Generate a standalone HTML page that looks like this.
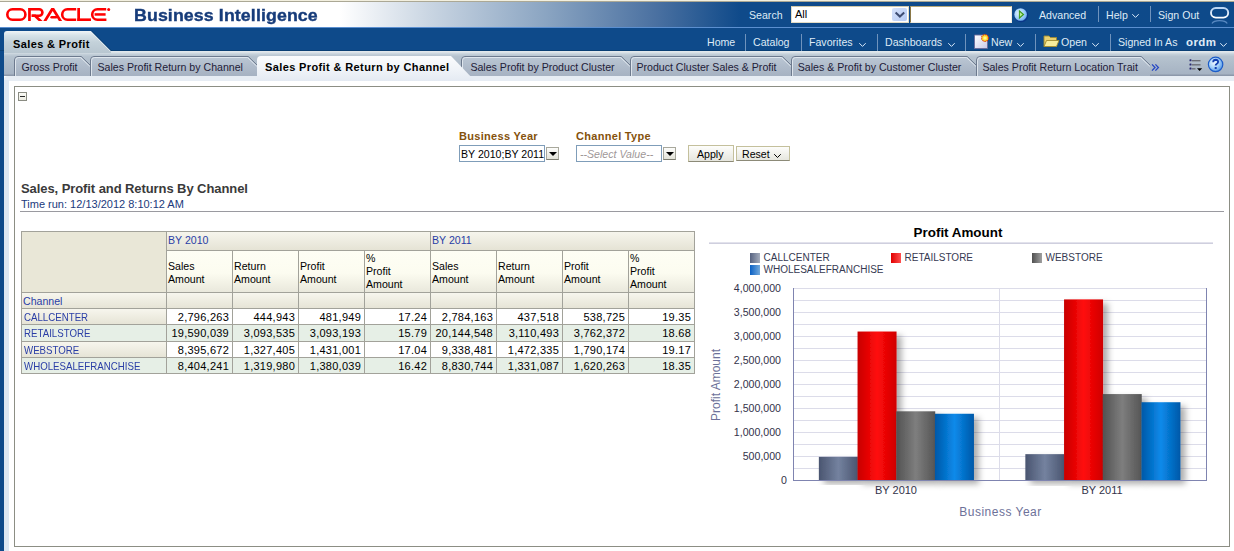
<!DOCTYPE html>
<html><head><meta charset="utf-8">
<style>
*{margin:0;padding:0;box-sizing:border-box}
html,body{width:1234px;height:551px;overflow:hidden;background:#fff;font-family:"Liberation Sans",sans-serif;font-size:11px;color:#000}
.a{position:absolute;white-space:nowrap}
#hdr{position:absolute;left:0;top:0;width:1234px;height:27px;border-top:2px solid #aba895;
 background:linear-gradient(to right,#fff 0,#fff 340px,#c9d5e2 430px,#8ba5c2 545px,#4b71a1 655px,#0f4a8a 740px,#0e4a8a 1234px)}
#row2{position:absolute;left:0;top:27px;width:1234px;height:24px;background:#0e4a8a;border-top:1px solid #5b8fd0}
#tabbar{position:absolute;left:0;top:51px;width:1234px;height:25px;
 background:linear-gradient(#e2e8ec 0,#e2e8ec 1px,#d2dce3 2px,#c2ced8 3.5px,#b6c3cf 5.5px,#aebbc9 14px,#a6b3c3 23px,#8c98aa 24px,#8c98aa 25px)}
#leftstrip{position:absolute;left:0;top:51px;width:4px;height:500px;background:#0e4a8a}
#frame{position:absolute;left:4px;top:76px;width:1230px;height:475px;background:#fff;border-top-left-radius:4px}
#frameband{position:absolute;left:4px;top:76px;width:1230px;height:5px;background:#e7edf4;border-top-left-radius:4px}
#framel{position:absolute;left:4px;top:80px;width:5px;height:471px;background:#dde7f2}
#box{position:absolute;left:14px;top:86px;width:1216px;height:461px;border:1px solid #8c8e84;border-right-color:#8c8e84}
.w{color:#dfeaf6}
.sep{position:absolute;width:1px;background:#6f93bd}
.tabt{top:61px;font-size:10.6px;color:#1e2038}
.pl{font-size:11px;font-weight:700;color:#85520c;letter-spacing:0.3px}
.dd{width:13px;height:13px;border:1px solid #a8a89c;border-bottom-color:#7c7c70;background:linear-gradient(#fdfdfb,#e2e2d8)}
.dd:after{content:"";position:absolute;left:2px;top:4px;border-left:4px solid transparent;border-right:4px solid transparent;border-top:4px solid #000}
.btn{border:1px solid #c4c09c;border-bottom-color:#8c8a78;background:linear-gradient(#fdfdfb,#e6e6de)}
.th{font-size:10.6px;color:#000}
.td{font-size:10.6px;color:#000}
</style></head><body>
<div id="hdr"></div>
<div class="a" style="left:0;top:0;width:1234px;height:1px;background:#f2efdf"></div>
<div id="row2"></div>
<div class="a" style="left:0;top:50px;width:1234px;height:1px;background:#0a3f74"></div>
<div id="tabbar"></div>
<div id="leftstrip"></div>
<div id="frame"></div>
<div id="frameband"></div>
<div id="framel"></div>
<div id="box"></div>

<!-- ORACLE logo -->
<svg class="a" style="left:0;top:0" width="115" height="27" viewBox="0 0 115 27">
 <g fill="none" stroke="#ff0000" stroke-width="2.6">
  <rect x="7.3" y="9.3" width="18.1" height="10.4" rx="5.2"/>
  <path d="M29.4,9.3 H39.2 A3.2,3.2 0 0 1 39.2,15.7 H31.5"/>
  <path d="M76.2,9.3 H67.4 A5.2,5.2 0 0 0 67.4,19.7 H76.2"/>
  <path d="M106.2,9.3 H97.4 A5.2,5.2 0 0 0 97.4,19.7 H106.4"/>
 </g>
 <g fill="#ff0000">
  <rect x="28.1" y="8" width="2.7" height="13"/>
  <path d="M31.6,14.6 H35.6 L42.6,21 H38.6 Z"/>
  <path d="M43.3,21 L51.3,8 H54.1 L62.1,21 H58.9 L52.7,11.1 L46.5,21 Z"/>
  <rect x="50.3" y="15.9" width="7" height="2.7" rx="1.3"/>
  <rect x="77.3" y="8" width="2.7" height="13"/>
  <rect x="77.3" y="18.4" width="13.7" height="2.6"/>
  <rect x="94.6" y="13.2" width="11" height="2.5"/>
  <circle cx="108.7" cy="9.4" r="1.5"/>
 </g>
</svg>

<div class="a" style="left:134px;top:6px;font-size:16.6px;font-weight:700;color:#173c7a;letter-spacing:0.1px;-webkit-text-stroke:0.35px #173c7a;transform:scaleX(1.07);transform-origin:0 0">Business Intelligence</div>

<!-- top right -->
<div class="a w" style="left:749px;top:9px;font-size:10.6px">Search</div>
<div class="a" style="left:791px;top:6px;width:118px;height:17px;background:#fff;border:1px solid #e4dcc4;border-top-color:#d2c8a8"></div>
<div class="a" style="left:795px;top:8px;font-size:11px;color:#000">All</div>
<div class="a" style="left:892px;top:8px;width:15px;height:13px;background:linear-gradient(135deg,#d6e2fb,#b6caf3);border-radius:2px"></div>
<svg class="a" style="left:894px;top:11px" width="12" height="8" viewBox="0 0 12 8"><path d="M1.6,1.6 L5.9,5.6 L10.2,1.6" fill="none" stroke="#3e4c72" stroke-width="2"/></svg>
<div class="a" style="left:910px;top:6px;width:102px;height:17px;background:#fff;border:1px solid #f0ece0;border-top-color:#b8a878;border-left-color:#8a7848"></div>
<svg class="a" style="left:1012px;top:6px" width="18" height="18" viewBox="0 0 18 18">
 <defs><radialGradient id="gb" cx="38%" cy="40%" r="62%"><stop offset="0" stop-color="#dff0ff"/><stop offset="0.6" stop-color="#a6d4fb"/><stop offset="1" stop-color="#6fb0f0"/></radialGradient></defs>
 <circle cx="9.2" cy="9.2" r="7" fill="#0a3688"/>
 <circle cx="8.6" cy="8.5" r="6.3" fill="url(#gb)"/>
 <path d="M6.9,3.8 L12.4,8.5 L6.9,13.2 Z" fill="#3c9a1c"/>
 <path d="M7.9,6.2 L10.6,8.5 L7.9,10.8 Z" fill="#b8ec98"/>
</svg>
<div class="a w" style="left:1039px;top:9px;font-size:10.6px">Advanced</div>
<div class="sep" style="left:1098px;top:6px;height:16px"></div>
<div class="a w" style="left:1106px;top:9px;font-size:10.6px">Help</div>
<svg class="a" style="left:1131px;top:13px" width="9" height="6" viewBox="0 0 9 6"><path d="M1.3,1.2 L4.5,4.4 L7.7,1.2" fill="none" stroke="#dcecfc" stroke-width="1"/></svg>
<div class="sep" style="left:1150px;top:6px;height:16px"></div>
<div class="a w" style="left:1158px;top:9px;font-size:10.6px">Sign Out</div>
<svg class="a" style="left:1208px;top:5px" width="24" height="20" viewBox="0 0 24 20">
 <defs><linearGradient id="rg" x1="0" y1="0" x2="0" y2="1"><stop offset="0" stop-color="#b8d4f4"/><stop offset="1" stop-color="#ffffff"/></linearGradient></defs>
 <rect x="3" y="3" width="17.2" height="9.6" rx="4.8" fill="none" stroke="url(#rg)" stroke-width="1.9"/>
 <path d="M4,18.5 Q5.5,15.6 11.6,15.6 Q17.7,15.6 19.2,18.5" fill="none" stroke="#6d9ad0" stroke-width="1.3" opacity="0.8"/>
</svg>

<!-- row 2 -->
<svg class="a" style="left:0;top:27px" width="120" height="28" viewBox="0 0 120 28">
 <defs><linearGradient id="tg" x1="0" y1="0" x2="0" y2="1"><stop offset="0" stop-color="#f0f5f7"/><stop offset="0.2" stop-color="#d6e2e8"/><stop offset="0.5" stop-color="#c4d2da"/><stop offset="1" stop-color="#b8c6d0"/></linearGradient></defs>
 <path d="M4,26 V7 Q4,4 7,4 H91 L111,24 V26 Z" fill="url(#tg)"/>
 <path d="M91.3,3.6 L111.6,23.9" stroke="#083a68" stroke-width="1" fill="none" opacity="0.7"/>
 <path d="M90.6,4.6 L110.4,24.4" stroke="#e8eff3" stroke-width="1" fill="none" opacity="0.8"/>
</svg>
<div class="a" style="left:13px;top:38px;font-size:11px;font-weight:700;color:#000;letter-spacing:0.38px">Sales &amp; Profit</div>

<div class="a w" style="left:707px;top:36px;font-size:10.6px">Home</div>
<div class="sep" style="left:745px;top:34px;height:17px"></div>
<div class="a w" style="left:753px;top:36px;font-size:10.6px">Catalog</div>
<div class="sep" style="left:801px;top:34px;height:17px"></div>
<div class="a w" style="left:809px;top:36px;font-size:10.6px">Favorites</div>
<svg class="a" style="left:858px;top:42px" width="9" height="6" viewBox="0 0 9 6"><path d="M1.3,1.2 L4.5,4.4 L7.7,1.2" fill="none" stroke="#dcecfc" stroke-width="1"/></svg>
<div class="sep" style="left:877px;top:34px;height:17px"></div>
<div class="a w" style="left:885px;top:36px;font-size:10.6px">Dashboards</div>
<svg class="a" style="left:947px;top:42px" width="9" height="6" viewBox="0 0 9 6"><path d="M1.3,1.2 L4.5,4.4 L7.7,1.2" fill="none" stroke="#dcecfc" stroke-width="1"/></svg>
<div class="sep" style="left:965px;top:34px;height:17px"></div>
<svg class="a" style="left:972px;top:32px" width="20" height="18" viewBox="0 0 20 18">
 <defs><linearGradient id="pg" x1="0" y1="0" x2="1" y2="1"><stop offset="0" stop-color="#ffffff"/><stop offset="1" stop-color="#c8c8e8"/></linearGradient></defs>
 <path d="M2.5,3 H11 L15.5,7.5 V16.5 H2.5 Z" fill="url(#pg)" stroke="#6a6a9a" stroke-width="0.9"/>
 <circle cx="13" cy="6" r="3.4" fill="#ffe030" stroke="#d83010" stroke-width="1.1" stroke-dasharray="1.4 0.8"/><circle cx="13" cy="6" r="1.6" fill="#fff890"/>
</svg>
<div class="a w" style="left:991px;top:36px;font-size:10.6px">New</div>
<svg class="a" style="left:1016px;top:42px" width="9" height="6" viewBox="0 0 9 6"><path d="M1.3,1.2 L4.5,4.4 L7.7,1.2" fill="none" stroke="#dcecfc" stroke-width="1"/></svg>
<div class="sep" style="left:1035px;top:34px;height:17px"></div>
<svg class="a" style="left:1042px;top:33px" width="18" height="16" viewBox="0 0 18 16">
 <path d="M2,3 H7 L8.5,4.5 H14.5 V13.5 H2 Z" fill="#e8d070" stroke="#a08a30" stroke-width="0.9"/>
 <path d="M2,13.5 L4.5,7.5 H17 L14.5,13.5 Z" fill="#f8ec9c" stroke="#a08a30" stroke-width="0.9"/>
</svg>
<div class="a w" style="left:1061px;top:36px;font-size:10.6px">Open</div>
<svg class="a" style="left:1091px;top:42px" width="9" height="6" viewBox="0 0 9 6"><path d="M1.3,1.2 L4.5,4.4 L7.7,1.2" fill="none" stroke="#dcecfc" stroke-width="1"/></svg>
<div class="sep" style="left:1110px;top:34px;height:17px"></div>
<div class="a w" style="left:1118px;top:36px;font-size:10.6px">Signed In As</div>
<div class="a w" style="left:1186px;top:36px;font-size:11.5px;font-weight:700;letter-spacing:0.4px">ordm</div>
<svg class="a" style="left:1219px;top:42px" width="9" height="6" viewBox="0 0 9 6"><path d="M1.3,1.2 L4.5,4.4 L7.7,1.2" fill="none" stroke="#dcecfc" stroke-width="1"/></svg>

<!-- tab bar -->
<svg class="a" style="left:0;top:51px" width="1234" height="31" viewBox="0 51 1234 31">
 <defs>
  <linearGradient id="itab" x1="0" y1="0" x2="0" y2="1"><stop offset="0" stop-color="#bcc8d5"/><stop offset="0.5" stop-color="#b0bccb"/><stop offset="1" stop-color="#a6b2c2"/></linearGradient>
  <linearGradient id="atab" x1="0" y1="0" x2="0" y2="1"><stop offset="0" stop-color="#fbfcfd"/><stop offset="0.6" stop-color="#eef2f7"/><stop offset="1" stop-color="#e4eaf2"/></linearGradient>
 </defs>
 <g id="tabs">
 <path d="M14,76 V60 Q14,56 18,56 H81 L90,65 V76 Z" fill="url(#itab)"/>
 <path d="M14.5,76 V60 Q14.5,56.5 18,56.5 H81.3 L90.3,65.3" fill="none" stroke="#6d7a8e" stroke-width="1"/>
 <path d="M15.5,76 V60.5 Q15.5,57.5 18.5,57.5 H80.5 L89.8,66.3" fill="none" stroke="#e6ecf2" stroke-width="1" opacity="0.85"/>
 <path d="M90,76 V60 Q90,56 94,56 H248 L257,65 V76 Z" fill="url(#itab)"/>
 <path d="M90.5,76 V60 Q90.5,56.5 94,56.5 H248.3 L257.3,65.3" fill="none" stroke="#6d7a8e" stroke-width="1"/>
 <path d="M91.5,76 V60.5 Q91.5,57.5 94.5,57.5 H247.5 L256.8,66.3" fill="none" stroke="#e6ecf2" stroke-width="1" opacity="0.85"/>
 <path d="M461,76 V60 Q461,56 465,56 H621 L630,65 V76 Z" fill="url(#itab)"/>
 <path d="M461.5,76 V60 Q461.5,56.5 465,56.5 H621.3 L630.3,65.3" fill="none" stroke="#6d7a8e" stroke-width="1"/>
 <path d="M462.5,76 V60.5 Q462.5,57.5 465.5,57.5 H620.5 L629.8,66.3" fill="none" stroke="#e6ecf2" stroke-width="1" opacity="0.85"/>
 <path d="M630,76 V60 Q630,56 634,56 H782 L791,65 V76 Z" fill="url(#itab)"/>
 <path d="M630.5,76 V60 Q630.5,56.5 634,56.5 H782.3 L791.3,65.3" fill="none" stroke="#6d7a8e" stroke-width="1"/>
 <path d="M631.5,76 V60.5 Q631.5,57.5 634.5,57.5 H781.5 L790.8,66.3" fill="none" stroke="#e6ecf2" stroke-width="1" opacity="0.85"/>
 <path d="M791,76 V60 Q791,56 795,56 H967 L976,65 V76 Z" fill="url(#itab)"/>
 <path d="M791.5,76 V60 Q791.5,56.5 795,56.5 H967.3 L976.3,65.3" fill="none" stroke="#6d7a8e" stroke-width="1"/>
 <path d="M792.5,76 V60.5 Q792.5,57.5 795.5,57.5 H966.5 L975.8,66.3" fill="none" stroke="#e6ecf2" stroke-width="1" opacity="0.85"/>
 <path d="M976,76 V60 Q976,56 980,56 H1141 L1150,65 V76 Z" fill="url(#itab)"/>
 <path d="M976.5,76 V60 Q976.5,56.5 980,56.5 H1141.3 L1150.3,65.3" fill="none" stroke="#6d7a8e" stroke-width="1"/>
 <path d="M977.5,76 V60.5 Q977.5,57.5 980.5,57.5 H1140.5 L1149.8,66.3" fill="none" stroke="#e6ecf2" stroke-width="1" opacity="0.85"/>
 <path d="M257,81 V60 Q257,56 261,56 H451 L475,81 Z" fill="url(#atab)"/>
 </g>
</svg>
<!--TABT-->
<div class="a tabt" style="left:21.6px">Gross Profit</div>
<div class="a tabt" style="left:97.5px">Sales Profit Return by Channel</div>
<div class="a tabt" style="left:470.4px">Sales Profit by Product Cluster</div>
<div class="a tabt" style="left:636.4px">Product Cluster Sales &amp; Profit</div>
<div class="a tabt" style="left:797.7px">Sales &amp; Profit by Customer Cluster</div>
<div class="a tabt" style="left:982.4px">Sales Profit Return Location Trait</div>
<div class="a" style="left:265px;top:61px;font-size:11px;font-weight:700;color:#000;letter-spacing:0.38px">Sales Profit &amp; Return by Channel</div>
<!--/TABT-->
<!--CONTENT-->
<div class="a" style="left:18px;top:92px;width:9px;height:9px;border:1px solid #8a8c82;background:linear-gradient(#fbfbf6,#ecece2)"></div>
<div class="a" style="left:20px;top:96px;width:5px;height:1px;background:#2a2a2a"></div>

<div class="a pl" style="left:459px;top:130px">Business Year</div>
<div class="a" style="left:459px;top:145px;width:86px;height:17px;border:1px solid #7f9db9;background:#fff"></div>
<div class="a" style="left:461px;top:148px;font-size:10.6px;color:#000">BY 2010;BY 2011</div>
<div class="a dd" style="left:546px;top:147px"></div>
<div class="a pl" style="left:576px;top:130px">Channel Type</div>
<div class="a" style="left:576px;top:145px;width:86px;height:17px;border:1px solid #7f9db9;background:#fff"></div>
<div class="a" style="left:580px;top:148px;font-size:10.6px;font-style:italic;color:#a09898">--Select Value--</div>
<div class="a dd" style="left:663px;top:147px"></div>
<div class="a btn" style="left:688px;top:145px;width:46px;height:17px"></div>
<div class="a" style="left:697px;top:148px;font-size:10.6px;color:#000">Apply</div>
<div class="a btn" style="left:736px;top:146px;width:54px;height:15px"></div>
<div class="a" style="left:742px;top:148px;font-size:10.6px;color:#000">Reset</div>
<svg class="a" style="left:773px;top:153px" width="9" height="6" viewBox="0 0 9 6"><path d="M1.2,1.2 L4.5,4.5 L7.8,1.2" fill="none" stroke="#000" stroke-width="1"/></svg>

<div class="a" style="left:21px;top:181px;font-size:13px;font-weight:700;color:#3a3a3a;letter-spacing:-0.08px">Sales, Profit and Returns By Channel</div>
<div class="a" style="left:21px;top:198px;font-size:11px;color:#213a7c">Time run: 12/13/2012 8:10:12 AM</div>
<div class="a" style="left:20px;top:211px;width:1204px;height:1px;background:#9a9aa0"></div>
<!--/CONTENT-->
<!--TABLE-->
<div class="a" style="left:21px;top:231px;width:145px;height:61px;background:#e9e7d7"></div>
<div class="a" style="left:166px;top:231px;width:528px;height:19px;background:linear-gradient(#f7f6ee,#e5e3d5)"></div>
<div class="a" style="left:166px;top:250px;width:528px;height:42px;background:linear-gradient(#fefef5 0,#fcfcf0 55%,#e9e8dc 100%)"></div>
<div class="a" style="left:21px;top:292px;width:673px;height:16px;background:linear-gradient(#f8f7ef,#e6e4d6)"></div>
<div class="a" style="left:21px;top:308px;width:145px;height:16px;background:linear-gradient(#f8f7ef,#e6e4d6)"></div>
<div class="a" style="left:166px;top:308px;width:528px;height:16px;background:#fff"></div>
<div class="a" style="left:21px;top:324px;width:673px;height:17px;background:#e6efe6"></div>
<div class="a" style="left:21px;top:341px;width:145px;height:16px;background:linear-gradient(#f8f7ef,#e6e4d6)"></div>
<div class="a" style="left:166px;top:341px;width:528px;height:16px;background:#fff"></div>
<div class="a" style="left:21px;top:357px;width:673px;height:16px;background:#e6efe6"></div>
<div class="a" style="left:21px;top:231px;width:674px;height:1px;background:#a2a29a"></div>
<div class="a" style="left:166px;top:250px;width:529px;height:1px;background:#a2a29a"></div>
<div class="a" style="left:21px;top:292px;width:674px;height:1px;background:#a2a29a"></div>
<div class="a" style="left:21px;top:308px;width:674px;height:1px;background:#a2a29a"></div>
<div class="a" style="left:21px;top:324px;width:674px;height:1px;background:#a2a29a"></div>
<div class="a" style="left:21px;top:341px;width:674px;height:1px;background:#a2a29a"></div>
<div class="a" style="left:21px;top:357px;width:674px;height:1px;background:#a2a29a"></div>
<div class="a" style="left:21px;top:373px;width:674px;height:1px;background:#a2a29a"></div>
<div class="a" style="left:21px;top:231px;width:1px;height:143px;background:#a2a29a"></div>
<div class="a" style="left:166px;top:231px;width:1px;height:143px;background:#a2a29a"></div>
<div class="a" style="left:232px;top:250px;width:1px;height:124px;background:#a2a29a"></div>
<div class="a" style="left:298px;top:250px;width:1px;height:124px;background:#a2a29a"></div>
<div class="a" style="left:364px;top:250px;width:1px;height:124px;background:#a2a29a"></div>
<div class="a" style="left:430px;top:231px;width:1px;height:143px;background:#a2a29a"></div>
<div class="a" style="left:496px;top:250px;width:1px;height:124px;background:#a2a29a"></div>
<div class="a" style="left:562px;top:250px;width:1px;height:124px;background:#a2a29a"></div>
<div class="a" style="left:628px;top:250px;width:1px;height:124px;background:#a2a29a"></div>
<div class="a" style="left:694px;top:231px;width:1px;height:143px;background:#a2a29a"></div>
<div class="a th" style="left:168px;top:234px;color:#2a3ea6">BY 2010</div>
<div class="a th" style="left:432px;top:234px;color:#2a3ea6">BY 2011</div>
<div class="a th" style="left:168px;top:260px;line-height:13px;white-space:normal">Sales<br>Amount</div>
<div class="a th" style="left:234px;top:260px;line-height:13px;white-space:normal">Return<br>Amount</div>
<div class="a th" style="left:300px;top:260px;line-height:13px;white-space:normal">Profit<br>Amount</div>
<div class="a th" style="left:366px;top:252px;line-height:13px;white-space:normal">%<br>Profit<br>Amount</div>
<div class="a th" style="left:432px;top:260px;line-height:13px;white-space:normal">Sales<br>Amount</div>
<div class="a th" style="left:498px;top:260px;line-height:13px;white-space:normal">Return<br>Amount</div>
<div class="a th" style="left:564px;top:260px;line-height:13px;white-space:normal">Profit<br>Amount</div>
<div class="a th" style="left:630px;top:252px;line-height:13px;white-space:normal">%<br>Profit<br>Amount</div>
<div class="a th" style="left:23px;top:295px;color:#2a3ea6">Channel</div>
<div class="a td" style="left:24px;top:311px;color:#2a3ea6;transform:scaleX(0.915);transform-origin:0 0">CALLCENTER</div>
<div class="a td" style="right:1005px;top:311px;font-size:11px;letter-spacing:0.25px">2,796,263</div>
<div class="a td" style="right:939px;top:311px;font-size:11px;letter-spacing:0.25px">444,943</div>
<div class="a td" style="right:873px;top:311px;font-size:11px;letter-spacing:0.25px">481,949</div>
<div class="a td" style="right:807px;top:311px;font-size:11px;letter-spacing:0.25px">17.24</div>
<div class="a td" style="right:741px;top:311px;font-size:11px;letter-spacing:0.25px">2,784,163</div>
<div class="a td" style="right:675px;top:311px;font-size:11px;letter-spacing:0.25px">437,518</div>
<div class="a td" style="right:609px;top:311px;font-size:11px;letter-spacing:0.25px">538,725</div>
<div class="a td" style="right:543px;top:311px;font-size:11px;letter-spacing:0.25px">19.35</div>
<div class="a td" style="left:24px;top:327px;color:#2a3ea6;transform:scaleX(0.915);transform-origin:0 0">RETAILSTORE</div>
<div class="a td" style="right:1005px;top:327px;font-size:11px;letter-spacing:0.25px">19,590,039</div>
<div class="a td" style="right:939px;top:327px;font-size:11px;letter-spacing:0.25px">3,093,535</div>
<div class="a td" style="right:873px;top:327px;font-size:11px;letter-spacing:0.25px">3,093,193</div>
<div class="a td" style="right:807px;top:327px;font-size:11px;letter-spacing:0.25px">15.79</div>
<div class="a td" style="right:741px;top:327px;font-size:11px;letter-spacing:0.25px">20,144,548</div>
<div class="a td" style="right:675px;top:327px;font-size:11px;letter-spacing:0.25px">3,110,493</div>
<div class="a td" style="right:609px;top:327px;font-size:11px;letter-spacing:0.25px">3,762,372</div>
<div class="a td" style="right:543px;top:327px;font-size:11px;letter-spacing:0.25px">18.68</div>
<div class="a td" style="left:24px;top:344px;color:#2a3ea6;transform:scaleX(0.915);transform-origin:0 0">WEBSTORE</div>
<div class="a td" style="right:1005px;top:344px;font-size:11px;letter-spacing:0.25px">8,395,672</div>
<div class="a td" style="right:939px;top:344px;font-size:11px;letter-spacing:0.25px">1,327,405</div>
<div class="a td" style="right:873px;top:344px;font-size:11px;letter-spacing:0.25px">1,431,001</div>
<div class="a td" style="right:807px;top:344px;font-size:11px;letter-spacing:0.25px">17.04</div>
<div class="a td" style="right:741px;top:344px;font-size:11px;letter-spacing:0.25px">9,338,481</div>
<div class="a td" style="right:675px;top:344px;font-size:11px;letter-spacing:0.25px">1,472,335</div>
<div class="a td" style="right:609px;top:344px;font-size:11px;letter-spacing:0.25px">1,790,174</div>
<div class="a td" style="right:543px;top:344px;font-size:11px;letter-spacing:0.25px">19.17</div>
<div class="a td" style="left:24px;top:360px;color:#2a3ea6;transform:scaleX(0.915);transform-origin:0 0">WHOLESALEFRANCHISE</div>
<div class="a td" style="right:1005px;top:360px;font-size:11px;letter-spacing:0.25px">8,404,241</div>
<div class="a td" style="right:939px;top:360px;font-size:11px;letter-spacing:0.25px">1,319,980</div>
<div class="a td" style="right:873px;top:360px;font-size:11px;letter-spacing:0.25px">1,380,039</div>
<div class="a td" style="right:807px;top:360px;font-size:11px;letter-spacing:0.25px">16.42</div>
<div class="a td" style="right:741px;top:360px;font-size:11px;letter-spacing:0.25px">8,830,744</div>
<div class="a td" style="right:675px;top:360px;font-size:11px;letter-spacing:0.25px">1,331,087</div>
<div class="a td" style="right:609px;top:360px;font-size:11px;letter-spacing:0.25px">1,620,263</div>
<div class="a td" style="right:543px;top:360px;font-size:11px;letter-spacing:0.25px">18.35</div>
<!--/TABLE-->
<!--CHART-->
<svg class="a" style="left:700px;top:215px" width="534" height="320" viewBox="700 215 534 320">
<defs>
 <linearGradient id="bc0" x1="0" x2="1"><stop offset="0" stop-color="#4a5570"/><stop offset="0.5" stop-color="#74829f"/><stop offset="1" stop-color="#4a5570"/></linearGradient>
 <linearGradient id="bc1" x1="0" x2="1"><stop offset="0" stop-color="#c80000"/><stop offset="0.5" stop-color="#ff0a0a"/><stop offset="1" stop-color="#d00000"/></linearGradient>
 <linearGradient id="bc2" x1="0" x2="1"><stop offset="0" stop-color="#525252"/><stop offset="0.5" stop-color="#7e7e7e"/><stop offset="1" stop-color="#555555"/></linearGradient>
 <linearGradient id="bc3" x1="0" x2="1"><stop offset="0" stop-color="#0058a8"/><stop offset="0.5" stop-color="#0a8aea"/><stop offset="1" stop-color="#0058a8"/></linearGradient>
 <linearGradient id="lg0" x1="0" x2="1"><stop offset="0" stop-color="#566280"/><stop offset="1" stop-color="#a4acbc"/></linearGradient>
 <linearGradient id="lg1" x1="0" x2="1"><stop offset="0" stop-color="#e00000"/><stop offset="1" stop-color="#ff5050"/></linearGradient>
 <linearGradient id="lg2" x1="0" x2="1"><stop offset="0" stop-color="#505050"/><stop offset="1" stop-color="#a0a0a0"/></linearGradient>
 <linearGradient id="lg3" x1="0" x2="1"><stop offset="0" stop-color="#0a60c4"/><stop offset="1" stop-color="#74aadc"/></linearGradient>
 <filter id="sh" x="-30%" y="-10%" width="160%" height="130%"><feDropShadow dx="5" dy="4" stdDeviation="3.2" flood-color="#000" flood-opacity="0.32"/></filter>
</defs>
<text x="958" y="237" text-anchor="middle" font-family="Liberation Sans" font-weight="700" font-size="13.4" fill="#000">Profit Amount</text>
<rect x="709" y="242" width="504" height="1" fill="#e2e2ec"/><rect x="709" y="243" width="504" height="1" fill="#cfcfde"/>
<rect x="750" y="253" width="10" height="10" fill="url(#lg0)"/>
<text x="763.5" y="261" font-family="Liberation Sans" font-size="10" fill="#363a52">CALLCENTER</text>
<rect x="891" y="253" width="10" height="10" fill="url(#lg1)"/>
<text x="904.5" y="261" font-family="Liberation Sans" font-size="10" fill="#363a52">RETAILSTORE</text>
<rect x="1032" y="253" width="10" height="10" fill="url(#lg2)"/>
<text x="1045.5" y="261" font-family="Liberation Sans" font-size="10" fill="#363a52">WEBSTORE</text>
<rect x="750" y="265" width="10" height="10" fill="url(#lg3)"/>
<text x="763.5" y="273" font-family="Liberation Sans" font-size="10" fill="#363a52">WHOLESALEFRANCHISE</text>
<rect x="794" y="468" width="412" height="1" fill="#dcdce9"/>
<rect x="794" y="456" width="412" height="1" fill="#dcdce9"/>
<rect x="794" y="444" width="412" height="1" fill="#dcdce9"/>
<rect x="794" y="432" width="412" height="1" fill="#dcdce9"/>
<rect x="794" y="420" width="412" height="1" fill="#dcdce9"/>
<rect x="794" y="408" width="412" height="1" fill="#dcdce9"/>
<rect x="794" y="396" width="412" height="1" fill="#dcdce9"/>
<rect x="794" y="384" width="412" height="1" fill="#dcdce9"/>
<rect x="794" y="372" width="412" height="1" fill="#dcdce9"/>
<rect x="794" y="360" width="412" height="1" fill="#dcdce9"/>
<rect x="794" y="348" width="412" height="1" fill="#dcdce9"/>
<rect x="794" y="336" width="412" height="1" fill="#dcdce9"/>
<rect x="794" y="324" width="412" height="1" fill="#dcdce9"/>
<rect x="794" y="312" width="412" height="1" fill="#dcdce9"/>
<rect x="794" y="300" width="412" height="1" fill="#dcdce9"/>
<rect x="794" y="288" width="412" height="1" fill="#dcdce9"/>
<rect x="999" y="288" width="1" height="192" fill="#dcdce9"/>
<rect x="793" y="288" width="1" height="193" fill="#7f84b0"/>
<rect x="1206" y="288" width="1" height="193" fill="#7f84b0"/>
<text x="781" y="292" text-anchor="end" font-family="Liberation Sans" font-size="10.6" fill="#33334a">4,000,000</text>
<text x="781" y="316" text-anchor="end" font-family="Liberation Sans" font-size="10.6" fill="#33334a">3,500,000</text>
<text x="781" y="340" text-anchor="end" font-family="Liberation Sans" font-size="10.6" fill="#33334a">3,000,000</text>
<text x="781" y="364" text-anchor="end" font-family="Liberation Sans" font-size="10.6" fill="#33334a">2,500,000</text>
<text x="781" y="388" text-anchor="end" font-family="Liberation Sans" font-size="10.6" fill="#33334a">2,000,000</text>
<text x="781" y="412" text-anchor="end" font-family="Liberation Sans" font-size="10.6" fill="#33334a">1,500,000</text>
<text x="781" y="436" text-anchor="end" font-family="Liberation Sans" font-size="10.6" fill="#33334a">1,000,000</text>
<text x="781" y="460" text-anchor="end" font-family="Liberation Sans" font-size="10.6" fill="#33334a">500,000</text>
<text x="787" y="484" text-anchor="end" font-family="Liberation Sans" font-size="10.6" fill="#33334a">0</text>
<rect x="818.85" y="456.87" width="39.00" height="23.13" fill="url(#bc0)" filter="url(#sh)"/>
<rect x="857.55" y="331.53" width="39.00" height="148.47" fill="url(#bc1)" filter="url(#sh)"/>
<rect x="896.25" y="411.31" width="39.00" height="68.69" fill="url(#bc2)" filter="url(#sh)"/>
<rect x="934.95" y="413.76" width="39.00" height="66.24" fill="url(#bc3)" filter="url(#sh)"/>
<rect x="1025.35" y="454.14" width="39.00" height="25.86" fill="url(#bc0)" filter="url(#sh)"/>
<rect x="1064.05" y="299.41" width="39.00" height="180.59" fill="url(#bc1)" filter="url(#sh)"/>
<rect x="1102.75" y="394.07" width="39.00" height="85.93" fill="url(#bc2)" filter="url(#sh)"/>
<rect x="1141.45" y="402.23" width="39.00" height="77.77" fill="url(#bc3)" filter="url(#sh)"/>
<rect x="793" y="480" width="414" height="1" fill="#7f84b0"/>
<text x="896" y="494" text-anchor="middle" font-family="Liberation Sans" font-size="11" fill="#33334a">BY 2010</text>
<text x="1102" y="494" text-anchor="middle" font-family="Liberation Sans" font-size="11" fill="#33334a">BY 2011</text>
<text x="1000.5" y="516" text-anchor="middle" font-family="Liberation Sans" font-size="12" letter-spacing="0.5" fill="#6d7199">Business Year</text>
<text transform="translate(720,385) rotate(-90)" text-anchor="middle" font-family="Liberation Sans" font-size="12" fill="#6d7199">Profit Amount</text>
</svg>
<!--/CHART-->
<!--ICONS-->
<svg class="a" style="left:1150px;top:63px" width="10" height="10" viewBox="0 0 10 10"><path d="M2,1.4 L5,4.5 L2,7.6 M5.4,1.4 L8.4,4.5 L5.4,7.6" fill="none" stroke="#2446c4" stroke-width="1.3"/></svg>
<svg class="a" style="left:1187px;top:57px" width="18" height="16" viewBox="0 0 18 16">
 <g fill="#2a2a70"><rect x="2.5" y="2.3" width="2" height="2" rx="0.6"/><rect x="2.5" y="6.5" width="2" height="2" rx="0.6"/><rect x="2.5" y="10.5" width="2" height="2" rx="0.6"/></g>
 <g fill="#5a5a62"><rect x="5" y="3.2" width="8.5" height="1.1"/><rect x="5" y="7.3" width="8.5" height="1.1"/><rect x="5" y="11.3" width="3.5" height="1.1"/></g>
 <path d="M10,11.2 H15.2 L12.6,13.9 Z" fill="#000"/>
</svg>
<svg class="a" style="left:1207px;top:56px" width="18" height="17" viewBox="0 0 18 17">
 <defs><radialGradient id="hb" cx="40%" cy="38%" r="62%"><stop offset="0" stop-color="#f0f8ff"/><stop offset="0.55" stop-color="#a8d4fa"/><stop offset="1" stop-color="#5a9ae6"/></radialGradient></defs>
 <circle cx="8.6" cy="8.4" r="7.2" fill="url(#hb)" stroke="#1c5cc8" stroke-width="1.2"/>
 <path d="M6.2,6.2 Q6.3,3.8 8.7,3.8 Q11.2,3.9 11.1,6 Q11,7.3 9.6,8 Q8.7,8.5 8.7,9.6" fill="none" stroke="#1340b0" stroke-width="1.9"/>
 <rect x="7.7" y="11" width="2" height="2" fill="#1340b0"/>
</svg>
<!--/ICONS-->
</body></html>
